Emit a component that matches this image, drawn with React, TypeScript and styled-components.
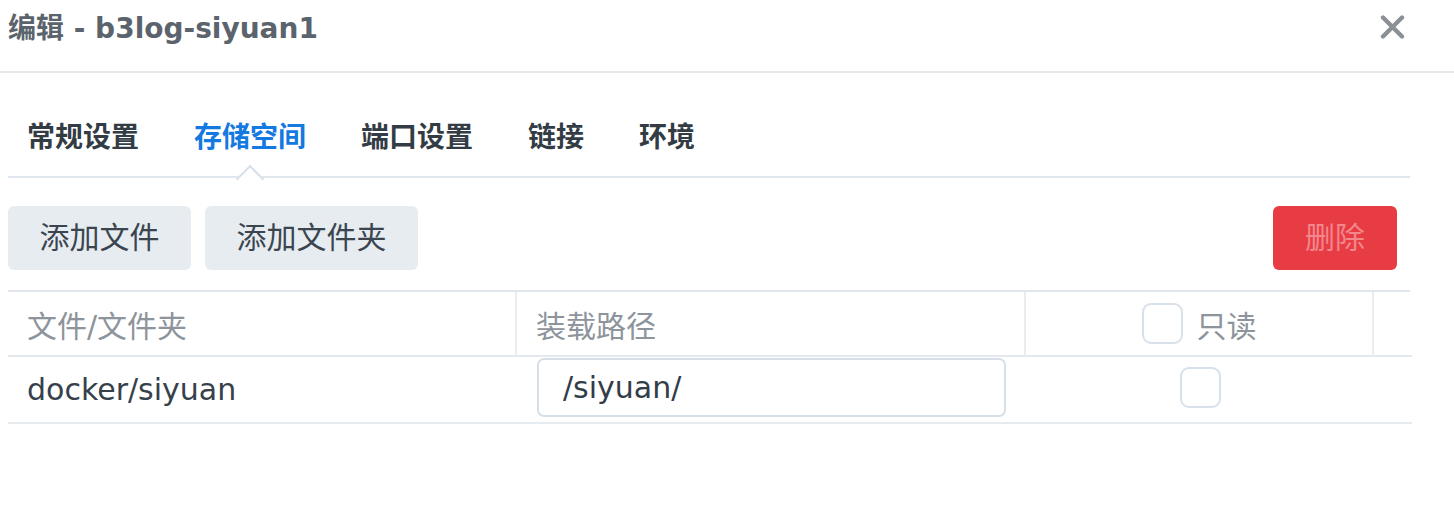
import React from "react";
import styled, { createGlobalStyle } from "styled-components";

const Global = createGlobalStyle`
  html, body { margin: 0; padding: 0; background: #ffffff; }
  body { font-family: "DejaVu Sans", "Noto Sans CJK SC", sans-serif; }
  * { box-sizing: border-box; }
`;

const Dialog = styled.div`
  width: 1454px;
  height: 524px;
  background: #fff;
`;

const Header = styled.div`
  display: flex;
  justify-content: space-between;
  align-items: flex-start;
  height: 73px;
  padding: 0 49px 0 8px;
  border-bottom: 2px solid #e4e9ee;
`;

const Title = styled.div`
  font-size: 28px;
  font-weight: bold;
  line-height: 57px;
  color: #5b636c;
  white-space: nowrap;
`;

const CloseButton = styled.button`
  margin-top: 15px;
  width: 25px;
  height: 24px;
  padding: 0;
  border: none;
  background: transparent;
  display: flex;
  cursor: pointer;
`;

const Body = styled.div`
  padding: 0 44px 0 8px;
`;

const TabBar = styled.div`
  display: flex;
  align-items: flex-end;
  gap: 55px;
  height: 105px;
  padding-left: 19px;
  border-bottom: 2px solid #dfe6ed;
`;

const Tab = styled.div<{ $active?: boolean }>`
  position: relative;
  font-size: 28px;
  font-weight: bold;
  line-height: 42px;
  padding-bottom: 17px;
  color: ${(p) => (p.$active ? "#1479e0" : "#333c45")};
  white-space: nowrap;
`;

const Caret = styled.span`
  position: absolute;
  left: 50%;
  bottom: -13px;
  width: 20px;
  height: 20px;
  margin-left: -10px;
  background: #fff;
  border-top: 2px solid #d7e0ea;
  border-left: 2px solid #d7e0ea;
  transform: rotate(45deg);
`;

const Toolbar = styled.div`
  display: flex;
  align-items: center;
  gap: 14px;
  padding: 28px 13px 0 0;
`;

const Spacer = styled.div`
  flex: 1;
`;

const Button = styled.button<{ $danger?: boolean }>`
  height: 64px;
  padding: 0 ${(p) => (p.$danger ? 32 : 31.5)}px;
  border: none;
  border-radius: 6px;
  font-family: "DejaVu Sans", "Noto Sans CJK SC", sans-serif;
  font-size: 30px;
  line-height: 64px;
  background: ${(p) => (p.$danger ? "#e83c44" : "#e7ecf0")};
  color: ${(p) => (p.$danger ? "#f2878c" : "#3b4550")};
  cursor: pointer;
`;

const Table = styled.div`
  margin-top: 20px;
  border-top: 2px solid #dfe6ed;
  display: grid;
  grid-template-columns: 509px 509px 348px 36px;
`;

const HeadCell = styled.div<{ $center?: boolean; $last?: boolean }>`
  height: 65px;
  display: flex;
  align-items: center;
  justify-content: ${(p) => (p.$center ? "center" : "flex-start")};
  gap: 14px;
  padding: 0 19px;
  font-size: 30px;
  color: #8d949b;
  border-bottom: 2px solid #e3e9ef;
  border-right: ${(p) => (p.$last ? "none" : "2px solid #e8edf2")};
  white-space: nowrap;
`;

const Cell = styled.div<{ $center?: boolean; $pad?: number }>`
  height: 67px;
  display: flex;
  align-items: center;
  justify-content: ${(p) => (p.$center ? "center" : "flex-start")};
  padding: 0 ${(p) => p.$pad ?? 19}px;
  font-size: 30px;
  color: #37414b;
  border-bottom: 2px solid #e6ebf0;
  white-space: nowrap;
`;

const PathInput = styled.input`
  width: 470px;
  height: 59px;
  margin-top: -4px;
  padding: 0 24px;
  border: 2px solid #d6dfe8;
  border-radius: 7px;
  font-family: "DejaVu Sans", sans-serif;
  font-size: 30px;
  color: #333d47;
  background: #fff;
  outline: none;
`;

const Checkbox = styled.span<{ $shift?: number }>`
  display: inline-block;
  width: 41px;
  height: 41px;
  border: 2px solid #d8e1ea;
  border-radius: 9px;
  background: #fff;
  margin-top: ${(p) => p.$shift ?? 0}px;
`;

const tabs = ["常规设置", "存储空间", "端口设置", "链接", "环境"];

export default function App() {
  return (
    <>
      <Global />
      <Dialog>
        <Header>
          <Title>编辑 - b3log-siyuan1</Title>
          <CloseButton aria-label="close">
            <svg width="25" height="24" viewBox="0 0 25 24">
              <path
                d="M3 2.5 L22 21.5 M22 2.5 L3 21.5"
                stroke="#8b9097"
                strokeWidth="4.4"
                strokeLinecap="round"
              />
            </svg>
          </CloseButton>
        </Header>
        <Body>
          <TabBar>
            {tabs.map((t) => (
              <Tab key={t} $active={t === "存储空间"}>
                {t}
                {t === "存储空间" && <Caret />}
              </Tab>
            ))}
          </TabBar>
          <Toolbar>
            <Button>添加文件</Button>
            <Button>添加文件夹</Button>
            <Spacer />
            <Button $danger>删除</Button>
          </Toolbar>
          <Table>
            <HeadCell>文件/文件夹</HeadCell>
            <HeadCell>装载路径</HeadCell>
            <HeadCell $center>
              <Checkbox />
              只读
            </HeadCell>
            <HeadCell $last />
            <Cell>docker/siyuan</Cell>
            <Cell $pad={20}>
              <PathInput defaultValue="/siyuan/" />
            </Cell>
            <Cell $center>
              <Checkbox $shift={-4} />
            </Cell>
            <Cell />
          </Table>
        </Body>
      </Dialog>
    </>
  );
}
